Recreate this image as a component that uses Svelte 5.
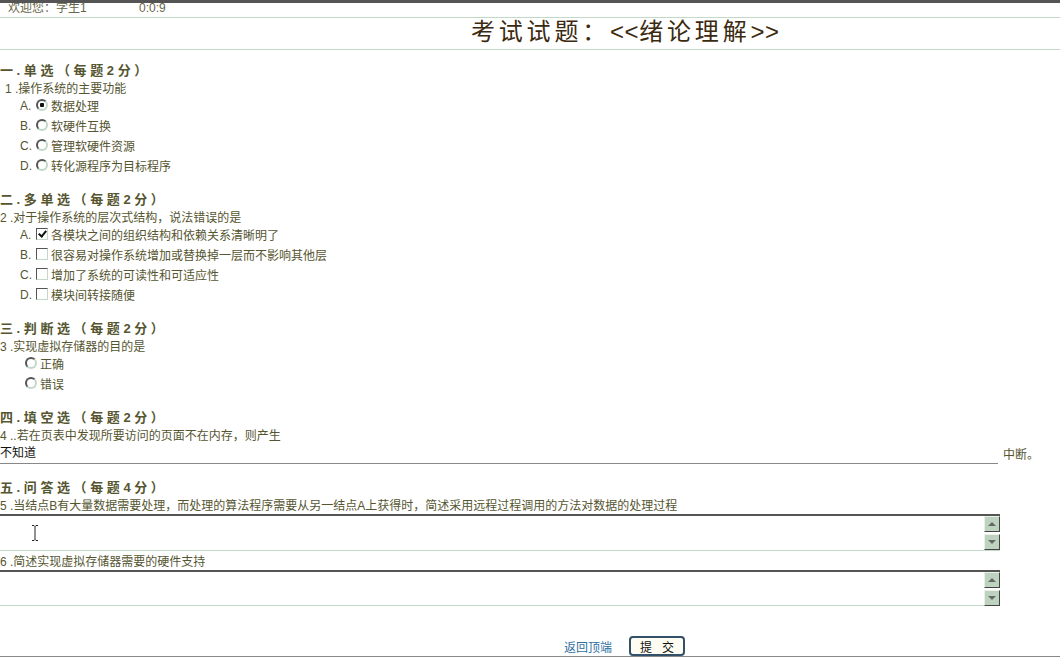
<script>
const single = ['数据处理', '软硬件互换', '管理软硬件资源', '转化源程序为目标程序']
const multi = ['各模块之间的组织结构和依赖关系清晰明了', '很容易对操作系统增加或替换掉一层而不影响其他层', '增加了系统的可读性和可适应性', '模块间转接随便']
const letters = ['A', 'B', 'C', 'D']
</script>

<div class="page">
  <div class="topbar">
    <span class="welcome">欢迎您：学生1</span>
    <span class="timer">0:0:9</span>
  </div>
  <h1 class="title">考试试题：<span class="angle">&lt;&lt;</span>绪论理解<span class="angle">&gt;&gt;</span></h1>

  <h2>一.单选（每题2分）</h2>
  <p class="q first">1 .操作系统的主要功能</p>
  {#each single as text, i}
    <label class="opt">
      <span class="letter">{letters[i]}.</span>
      <input type="radio" name="q1" checked={i === 0} />
      <span class="label">{text}</span>
    </label>
  {/each}

  <h2>二.多单选（每题2分）</h2>
  <p class="q">2 .对于操作系统的层次式结构，说法错误的是</p>
  {#each multi as text, i}
    <label class="opt">
      <span class="letter">{letters[i]}.</span>
      <input type="checkbox" checked={i === 0} />
      <span class="label">{text}</span>
    </label>
  {/each}

  <h2>三.判断选（每题2分）</h2>
  <p class="q">3 .实现虚拟存储器的目的是</p>
  <label class="opt judge"><input type="radio" name="q3" /><span class="label">正确</span></label>
  <label class="opt judge"><input type="radio" name="q3" /><span class="label">错误</span></label>

  <h2>四.填空选（每题2分）</h2>
  <p class="q">4 ..若在页表中发现所要访问的页面不在内存，则产生</p>
  <div class="fill">
    <input class="blank" value="不知道" />
    <span class="suffix">中断。</span>
  </div>

  <h2 class="h5">五.问答选（每题4分）</h2>
  <p class="q">5 .当结点B有大量数据需要处理，而处理的算法程序需要从另一结点A上获得时，简述采用远程过程调用的方法对数据的处理过程</p>
  <div class="area">
    <svg class="cursor" width="8" height="16" viewBox="0 0 8 16"><path d="M1 .5h2l1 1 1-1h2M4 1.500v13M1 15.500h2l1-1 1 1h2" fill="none" stroke="#222"/></svg>
    <div class="scroll">
      <span class="btn"><i class="up"></i></span>
      <span class="btn"><i class="down"></i></span>
    </div>
  </div>
  <p class="q q6">6 .简述实现虚拟存储器需要的硬件支持</p>
  <div class="area">
    <div class="scroll">
      <span class="btn"><i class="up"></i></span>
      <span class="btn"><i class="down"></i></span>
    </div>
  </div>

  <div class="foot">
    <a href="#top">返回顶端</a>
    <button>提&nbsp;&nbsp;&nbsp;交</button>
  </div>
</div>

<style>
:global(body) {
  background: #fff;
  overflow: hidden;
}
.page {
  width: 1060px;
  height: 657px;
  box-sizing: border-box;
  border-bottom: 1px solid #888;
  overflow: hidden;
  font-family: "Liberation Sans", "Noto Sans CJK SC", sans-serif;
  font-size: 12px;
  color: #55552f;
}
.topbar {
  height: 14px;
  border-top: 3px solid #555;
  border-bottom: 1px solid #c3d9c8;
  display: flex;
  line-height: 10px;
  color: #666648;
  overflow: hidden;
}
.welcome {
  margin-left: 8px;
  width: 131px;
}
.title {
  height: 31px;
  margin: 0;
  border-bottom: 1px solid #c3d9c8;
  padding-left: 471px;
  font-size: 24px;
  font-weight: 400;
  line-height: 28px;
  letter-spacing: 3.8px;
  color: #3c2a10;
  white-space: nowrap;
}
.angle {
  letter-spacing: 0.6px;
}
h2 {
  margin: 15px 0 0;
  height: 17px;
  line-height: 16px;
  font-size: 13px;
  font-weight: 700;
  letter-spacing: 3.6px;
  color: #55552f;
}
h1 + h2 {
  margin-top: 13px;
}
.q {
  margin: 0;
  height: 17px;
  line-height: 18px;
  white-space: nowrap;
}
.first {
  padding-left: 5px;
}
.opt {
  display: flex;
  align-items: center;
  height: 20px;
  padding-left: 20px;
}
.label {
  line-height: 16px;
}
.letter {
  width: 16px;
  margin-top: -2px;
}
.opt input {
  appearance: none;
  width: 12px;
  height: 12px;
  margin: -4px 3px 0 0;
  background: #fff;
  position: relative;
}
input[type="radio"] {
  border-radius: 50%;
  border: 2px solid #555;
  border-right-color: #c3d9c8;
  border-bottom-color: #c3d9c8;
  box-sizing: border-box;
}
input[type="radio"]:checked {
  background: radial-gradient(circle, #111 0 2px, #fff 2.5px);
}
input[type="checkbox"] {
  box-sizing: border-box;
  border: 1px solid #555;
  border-right-color: #c3d9c8;
  border-bottom-color: #c3d9c8;
}
input[type="checkbox"]:checked::after {
  content: "";
  position: absolute;
  left: 3px;
  top: 0;
  width: 3px;
  height: 6px;
  border: solid #111;
  border-width: 0 2px 2px 0;
  transform: rotate(40deg);
}
.judge {
  padding-left: 25px;
}
.fill {
  display: flex;
  height: 20px;
}
.blank {
  width: 998px;
  height: 20px;
  box-sizing: border-box;
  border: 0;
  border-bottom: 1px solid #888;
  padding: 0 0 4px;
  outline: 0;
  font: inherit;
  color: #111;
  background: none;
}
.suffix {
  margin-left: 5px;
  line-height: 22px;
}
h2.h5 {
  margin-top: 16px;
}
.area {
  position: relative;
  width: 1000px;
  height: 37px;
  box-sizing: border-box;
  border-top: 2px solid #555;
  border-bottom: 1px solid #c3d9c8;
}
.q6 {
  margin-top: 2px;
}
.q6 + .area {
  height: 36px;
}
.cursor {
  position: absolute;
  left: 31px;
  top: 9px;
}
.scroll {
  position: absolute;
  right: 0;
  top: 0;
  width: 16px;
  height: 34px;
  display: flex;
  flex-direction: column;
  justify-content: space-between;
}
.btn {
  height: 16px;
  background: #bdd3bf;
  border: 1px solid;
  border-color: #e8f0e8 #444 #444 #e8f0e8;
  box-sizing: border-box;
  display: flex;
  align-items: center;
  justify-content: center;
}
.up, .down {
  width: 0;
  height: 0;
  border-left: 4px solid transparent;
  border-right: 4px solid transparent;
}
.up {
  border-bottom: 4px solid #666;
}
.down {
  border-top: 4px solid #666;
}
.foot {
  display: flex;
  align-items: center;
  height: 20px;
  margin-top: 30px;
  padding-left: 564px;
}
.foot a {
  color: #2f6f9f;
  text-decoration: none;
  width: 65px;
}
.foot button {
  width: 56px;
  height: 20px;
  border: 2px solid #33506a;
  border-radius: 4px;
  background: #fffdf2;
  font: inherit;
  color: #111;
  padding: 0;
}
</style>
